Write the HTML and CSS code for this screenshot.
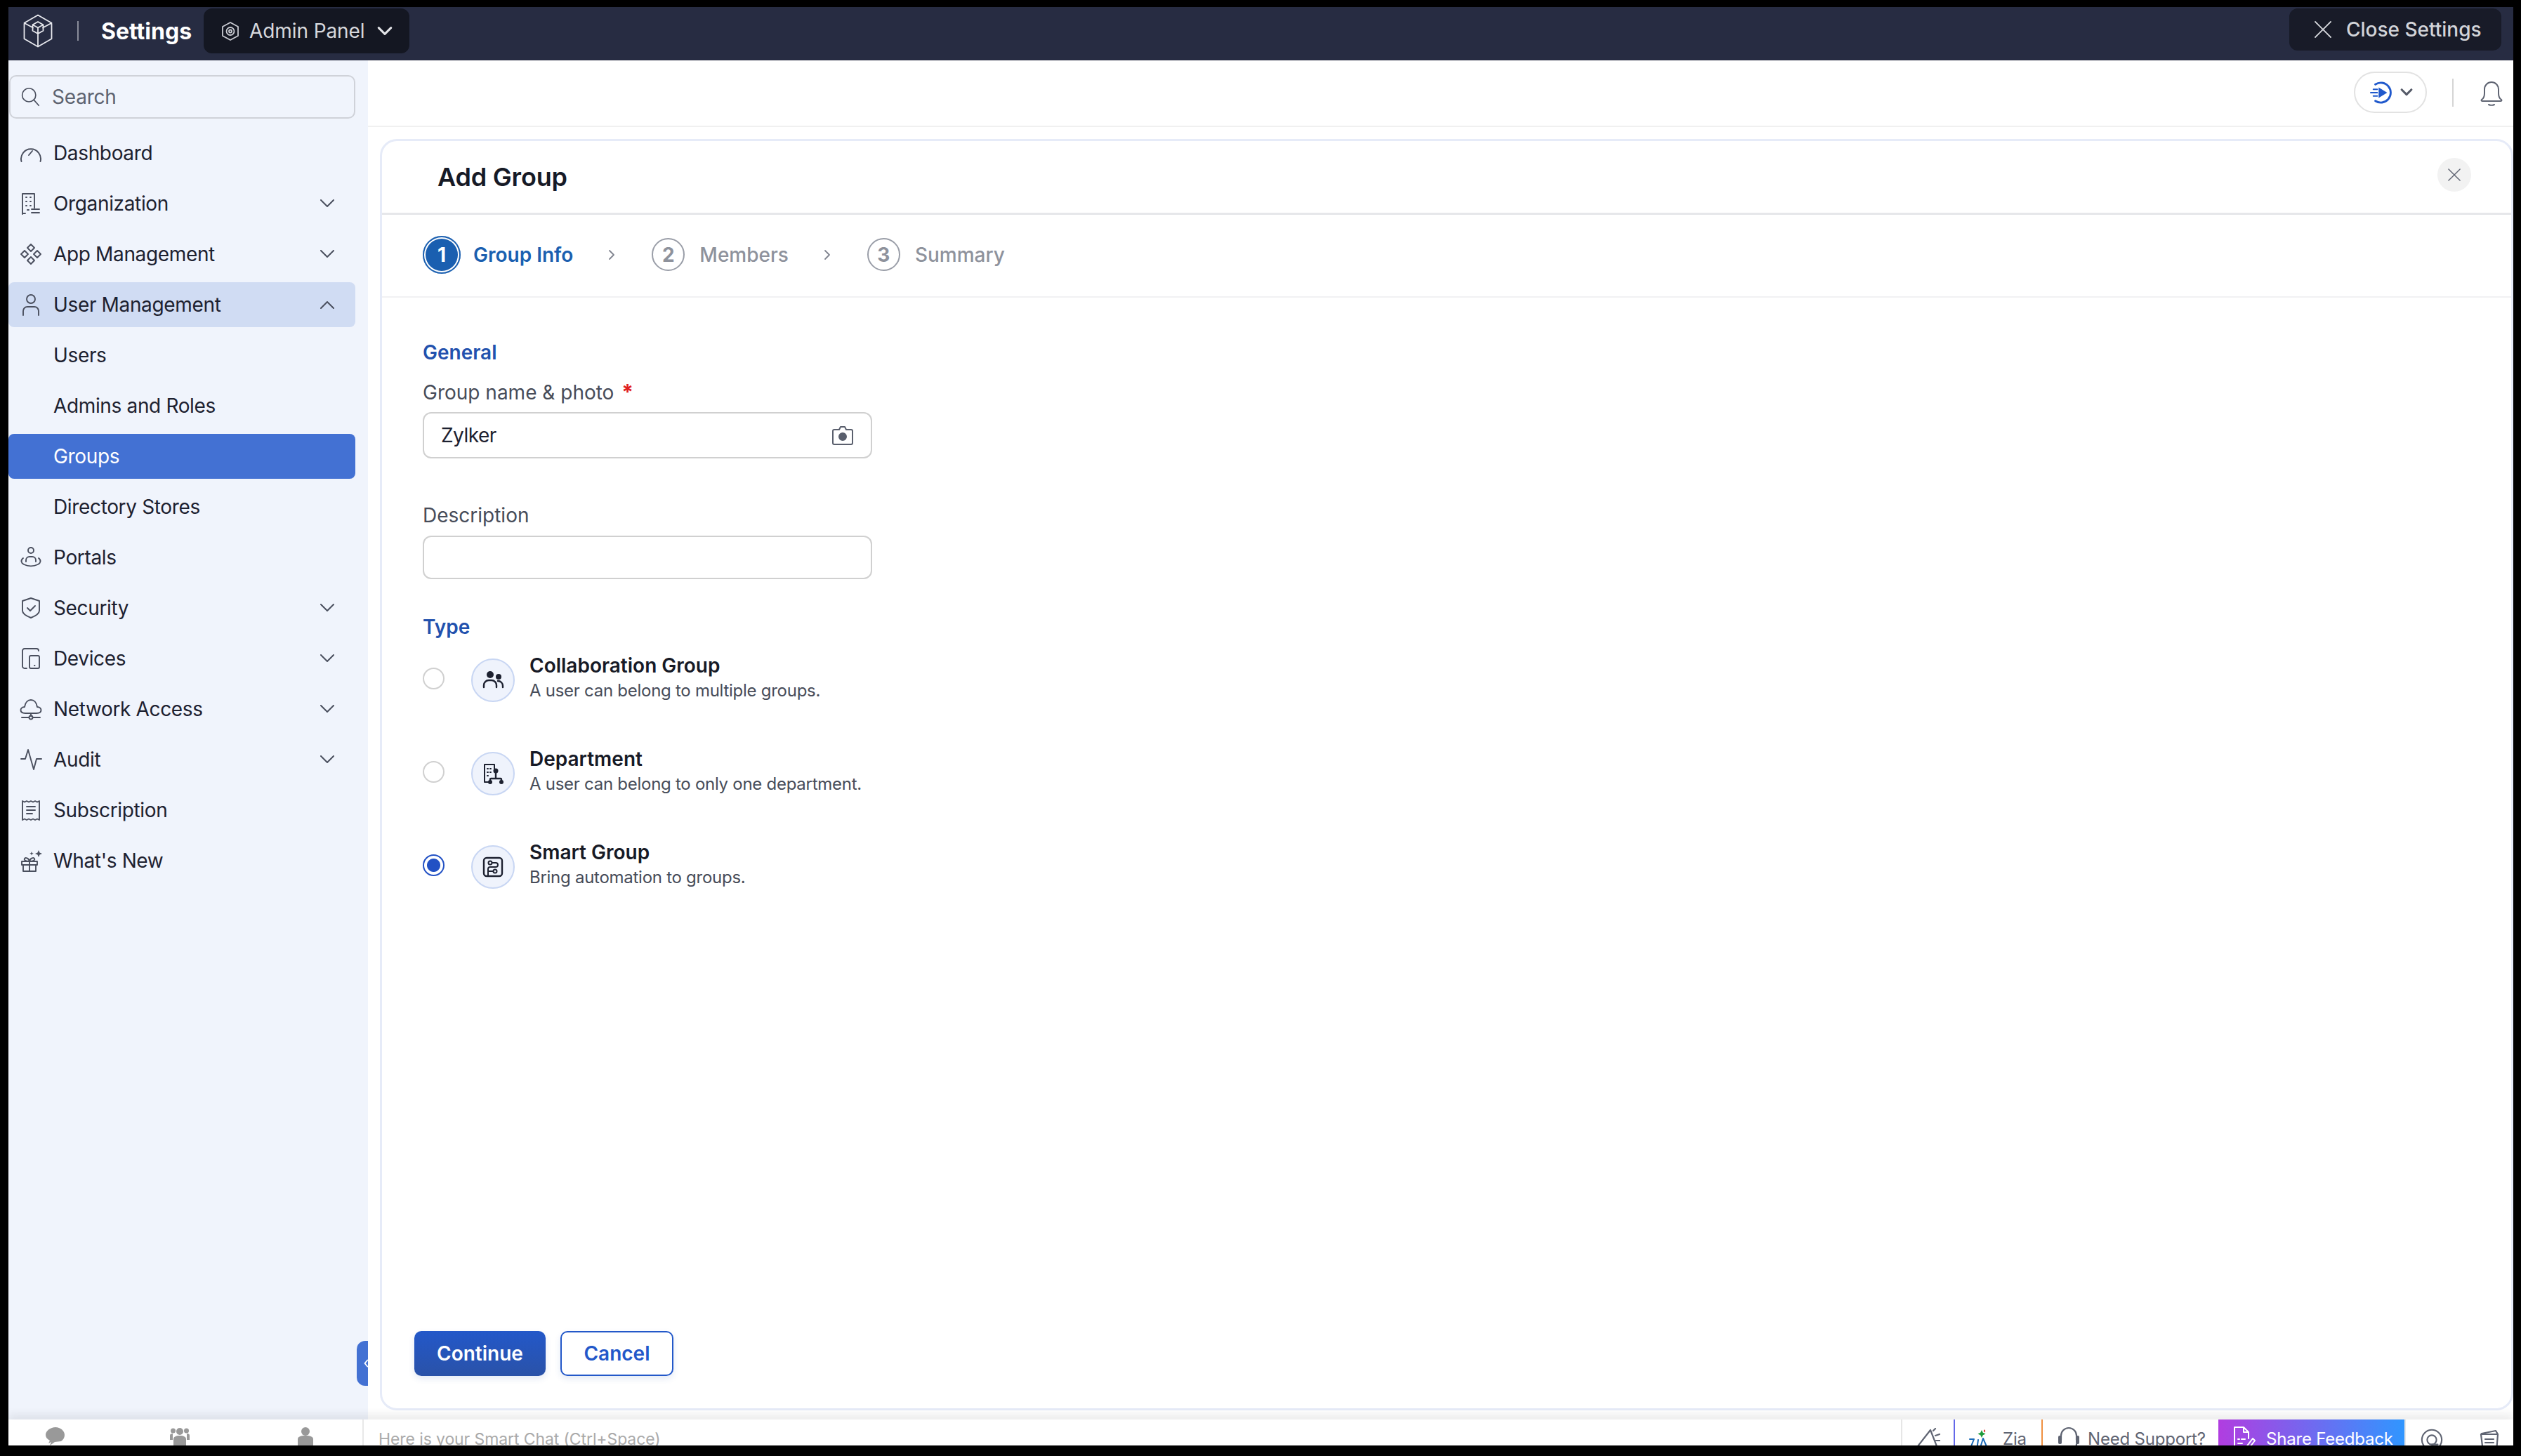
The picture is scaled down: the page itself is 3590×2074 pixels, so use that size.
FILE: index.html
```html
<!DOCTYPE html>
<html lang="en">
<head>
    <meta charset="UTF-8">
    <title>Settings - Add Group</title>
    <link rel="stylesheet" href="styles.css">
</head>
<body>
<div class="frame">
    <!-- Top bar -->
    <header class="topbar">
        <svg class="logo" viewBox="0 0 42 48"><path d="M21 1.500 40.500 12.700v22.600L21 46.500 1.500 35.300V12.700zM1.500 12.700 14 19.500M40.500 12.700 28 19.500M21 46.500V29M21 11l7.500 4.300v8.500L21 28l-7.500-4.200v-8.500zM13.500 15.300 21 19.500l7.500-4.200M21 19.500V28"/></svg>
        <span class="topbar-sep"></span>
        <span class="topbar-title">Settings</span>
        <div class="panel-switch">
            <svg class="panel-icon" viewBox="0 0 24 27"><path d="M12 1 23 7v13l-11 6-11-6V7z"/><circle cx="12" cy="13.500" r="5.500"/><circle cx="12" cy="13.500" r="2"/></svg>
            <span>Admin Panel</span>
            <svg class="panel-chev" viewBox="0 0 24 16"><path d="M2 3l10 10L22 3"/></svg>
        </div>
        <div class="close-settings">
            <svg class="x-icon" viewBox="0 0 24 24"><path d="M1 1l22 22M23 1 1 23"/></svg>
            <span>Close Settings</span>
        </div>
    </header>

    <div class="middle">
        <!-- Sidebar -->
        <aside class="sidebar">
            <div class="search">
                <svg class="ic" viewBox="0 0 32 32"><circle cx="14" cy="13" r="11"/><path d="M22 21l8 9"/></svg>
                <span>Search</span>
            </div>
            <nav class="nav">
                <div class="nav-item">
                    <svg class="ic" viewBox="0 0 32 32"><path d="M2.500 28a14 14 0 1 1 27 0M13 19l5-6"/></svg>
                    <span>Dashboard</span>
                </div>
                <div class="nav-item">
                    <svg class="ic" viewBox="0 0 32 32"><path d="M4 31V2h17v20M4 30h4M11 25h2M17 24h11M17 29h11M9 7h1M15 7h1M9 13h1M15 13h1M9 19h1M15 19h1"/></svg>
                    <span>Organization</span>
                    <svg class="chev" viewBox="0 0 20 12"><path d="M1 1l9 9 9-9"/></svg>
                </div>
                <div class="nav-item">
                    <svg class="ic" viewBox="0 0 32 32"><path d="M16 2l5 5-5 5-5-5zM7 11l5 5-5 5-5-5zM25 11l5 5-5 5-5-5zM16 20l5 5-5 5-5-5z"/></svg>
                    <span>App Management</span>
                    <svg class="chev" viewBox="0 0 20 12"><path d="M1 1l9 9 9-9"/></svg>
                </div>
                <div class="nav-item is-open">
                    <svg class="ic" viewBox="0 0 32 32"><circle cx="16" cy="8" r="6"/><path d="M5 31v-6a6 6 0 0 1 6-6h10a6 6 0 0 1 6 6v6"/></svg>
                    <span>User Management</span>
                    <svg class="chev" viewBox="0 0 20 12"><path d="M1 11l9-9 9 9"/></svg>
                </div>
                <div class="nav-item sub">Users</div>
                <div class="nav-item sub">Admins and Roles</div>
                <div class="nav-item sub is-active">Groups</div>
                <div class="nav-item sub">Directory Stores</div>
                <div class="nav-item">
                    <svg class="ic" viewBox="0 0 32 32"><circle cx="16" cy="6" r="4"/><path d="M9 22v-2a5 5 0 0 1 5-5h4a5 5 0 0 1 5 5v2M5 17c-4 3-3 7 1 9 6 3 14 3 20 0 4-2 5-6 1-9"/></svg>
                    <span>Portals</span>
                </div>
                <div class="nav-item">
                    <svg class="ic" viewBox="0 0 32 32"><path d="M16 2l12 4v14c0 5-7 8-12 10C11 28 4 25 4 20V6zM11 16l4 4 7-7"/></svg>
                    <span>Security</span>
                    <svg class="chev" viewBox="0 0 20 12"><path d="M1 1l9 9 9-9"/></svg>
                </div>
                <div class="nav-item">
                    <svg class="ic" viewBox="0 0 32 32"><path d="M10 30H7a3 3 0 0 1-3-3V5a3 3 0 0 1 3-3h17a3 3 0 0 1 3 3M16 12h10a2 2 0 0 1 2 2v14a2 2 0 0 1-2 2H16a2 2 0 0 1-2-2V14a2 2 0 0 1 2-2zM21 26h.5"/></svg>
                    <span>Devices</span>
                    <svg class="chev" viewBox="0 0 20 12"><path d="M1 1l9 9 9-9"/></svg>
                </div>
                <div class="nav-item">
                    <svg class="ic" viewBox="0 0 32 32"><path d="M8 22c-9 0-8-9-1-9C8 6 12 3 16 3s8 3 9 10c7 0 8 9-1 9zM16 22v4M3 28h10M19 28h10"/><circle cx="16" cy="28" r="2.500"/></svg>
                    <span>Network Access</span>
                    <svg class="chev" viewBox="0 0 20 12"><path d="M1 1l9 9 9-9"/></svg>
                </div>
                <div class="nav-item">
                    <svg class="ic" viewBox="0 0 32 32"><path d="M2 15h6l4-13 8 28 4-15h7"/></svg>
                    <span>Audit</span>
                    <svg class="chev" viewBox="0 0 20 12"><path d="M1 1l9 9 9-9"/></svg>
                </div>
                <div class="nav-item">
                    <svg class="ic" viewBox="0 0 32 32"><path d="M4 3l3 1.500L10 3l3 1.500L16 3l3 1.500L22 3l3 1.500L28 3v27l-3-1.500-3 1.500-3-1.500-3 1.500-3-1.500-3 1.500-3-1.500L4 30zM10 11h12M10 16h12M10 21h8"/></svg>
                    <span>Subscription</span>
                </div>
                <div class="nav-item">
                    <svg class="ic" viewBox="0 0 32 32"><path d="M3 17h22v5H3zM5 22v9h18v-9M14 17v14M14 17c-6 0-8-2-7-4s6-1 7 4c1-5 6-6 7-4s-1 4-7 4z"/><path class="ic-fill" d="M27 1l1.500 3.500L32 6l-3.500 1.500L27 11l-1.500-3.500L22 6l3.500-1.500zM17 3l.8 2 2 .8-2 .8-.8 2-.8-2-2-.8 2-.8z"/></svg>
                    <span>What's New</span>
                </div>
            </nav>
            <div class="side-toggle"><svg viewBox="0 0 8 16"><path d="M7 2 2 8l5 6"/></svg></div>
        </aside>

        <main class="main">
            <div class="util-bar">
                <div class="play-pill">
                    <svg class="play-icon" viewBox="0 0 34 32"><path d="M8 3.500A15 15 0 1 1 8 28.500"/><path class="play-tri" d="M13 8l13 8-13 8z"/><path d="M5 11h6M1 16h10M5 21h6" stroke-width="2"/></svg>
                    <svg class="play-chev" viewBox="0 0 20 14"><path d="M2 2l8 8 8-8"/></svg>
                </div>
                <span class="util-sep"></span>
                <svg class="bell" viewBox="0 0 34 38"><path d="M3 29c3-2 4-5 4-9v-6a10 10 0 0 1 20 0v6c0 4 1 7 4 9 1 1 0 2-1 2H4c-1 0-2-1-1-2zM13 36c2 1 6 1 8 0"/></svg>
            </div>

            <section class="card">
                <div class="card-head">
                    <h1>Add Group</h1>
                    <button class="card-close"><svg viewBox="0 0 20 20"><path d="M1 1l18 18M19 1 1 19"/></svg></button>
                </div>

                <div class="stepper">
                    <div class="step is-current"><span class="step-num">1</span><span class="step-label">Group Info</span></div>
                    <svg class="step-arrow" viewBox="0 0 10 16"><path d="M2 2l6 6-6 6"/></svg>
                    <div class="step"><span class="step-num">2</span><span class="step-label">Members</span></div>
                    <svg class="step-arrow" viewBox="0 0 10 16"><path d="M2 2l6 6-6 6"/></svg>
                    <div class="step"><span class="step-num">3</span><span class="step-label">Summary</span></div>
                </div>

                <form class="form">
                    <h2 class="section-title">General</h2>
                    <label class="field-label">Group name &amp; photo <span class="req">*</span></label>
                    <div class="field field-name">
                        <span>Zylker</span>
                        <svg class="camera" viewBox="0 0 32 32"><path d="M4 8h7l2-4h6l2 4h7a2 2 0 0 1 2 2v0V27a2 2 0 0 1-2 2H4a2 2 0 0 1-2-2V10a2 2 0 0 1 2-2z"/><circle cx="16" cy="18" r="5"/></svg>
                    </div>
                    <label class="field-label label-desc">Description</label>
                    <div class="field field-desc"></div>
                    <h2 class="section-title title-type">Type</h2>

                    <div class="type-list">
                        <div class="type-row">
                            <span class="radio"></span>
                            <span class="type-icon">
                                <svg viewBox="0 0 32 32"><circle cx="12" cy="8" r="5" class="solid"/><circle cx="24" cy="11" r="4" class="solid"/><path d="M3 26v-3a7 7 0 0 1 7-7h4a7 7 0 0 1 7 7v3M23 17c4 0 7 3 7 7v2"/></svg>
                            </span>
                            <div class="type-text"><strong>Collaboration Group</strong><p>A user can belong to multiple groups.</p></div>
                        </div>
                        <div class="type-row">
                            <span class="radio"></span>
                            <span class="type-icon">
                                <svg viewBox="0 0 32 32"><path d="M10 28H4V3h14v6" stroke-width="2"/><path d="M8 9h1M12 9h1M8 14h1M12 14h1M8 19h1" stroke-width="2"/><circle cx="20" cy="12" r="3.500" class="solid"/><path d="M20 14v9M12 28v-4a1 1 0 0 1 1-1h14a1 1 0 0 1 1 1v4"/><circle cx="12" cy="28" r="3" class="solid"/><circle cx="28" cy="28" r="3" class="solid"/></svg>
                            </span>
                            <div class="type-text"><strong>Department</strong><p>A user can belong to only one department.</p></div>
                        </div>
                        <div class="type-row">
                            <span class="radio is-on"></span>
                            <span class="type-icon">
                                <svg viewBox="0 0 32 32"><rect x="3" y="3" width="26" height="26" rx="4"/><circle cx="12" cy="10" r="2.500" stroke-width="2"/><circle cx="19" cy="22" r="2.500" stroke-width="2"/><path d="M15 10h5a3 3 0 0 1 0 6h-8a3 3 0 0 0-3 3v10M16 22H9" stroke-width="2"/></svg>
                            </span>
                            <div class="type-text"><strong>Smart Group</strong><p>Bring automation to groups.</p></div>
                        </div>
                    </div>
                </form>

                <div class="actions">
                    <button class="btn btn-primary">Continue</button>
                    <button class="btn btn-outline">Cancel</button>
                </div>
            </section>
        </main>
    </div>

    <!-- Bottom bar, cut off by the edge of the window -->
    <footer class="footbar">
        <div class="foot-left">
            <svg class="foot-ic ic-chat" viewBox="0 0 28 26"><path d="M15 0c7 0 13 5 13 11 0 4-2 7-5 9l-9 1-7 5 2-5-4 2 2-4C3 17 1 14 1 11 1 5 8 0 15 0z"/></svg>
            <svg class="foot-ic ic-people" viewBox="0 0 28 26"><circle cx="14" cy="6" r="5"/><circle cx="4.500" cy="5" r="3.500"/><circle cx="23.500" cy="5" r="3.500"/><path d="M5 26V17c0-3 3-5 9-5s9 2 9 5v9zM0 18v-6c0-2 1-3 4-3v9zM28 18v-6c0-2-1-3-4-3v9z"/></svg>
            <svg class="foot-ic ic-person" viewBox="0 0 22 26"><circle cx="11" cy="6" r="6"/><path d="M0 26V17c0-3 3-5 11-5s11 2 11 5v9z"/></svg>
        </div>
        <div class="foot-chat">Here is your Smart Chat (Ctrl+Space)</div>
        <div class="foot-seg seg-announce">
            <svg class="foot-line" viewBox="0 0 34 34"><path d="M20 3 2 26l5 6 22-6zM24 4l3-3M27 11l6-2M28 18h6"/></svg>
        </div>
        <div class="foot-seg seg-zia">
            <svg class="zia-logo" viewBox="0 0 30 30"><path class="zia-star" d="M18 1l1.800 3.700L23.500 6.500 19.800 8.300 18 12l-1.800-3.700L12.500 6.500l3.700-1.800z"/><path class="zia-dot" d="M22 0l1.300 2.200L22 4.400l-1.300-2.200z"/><path class="zia-text" d="M1 14h6L1 29M13 15l-2 14M20 13l-5 16M20 13l7 16"/></svg>
            <span>Zia</span>
        </div>
        <div class="foot-seg seg-support">
            <svg class="foot-line head" viewBox="0 0 32 36"><path d="M5 20v-6a11 11 0 0 1 22 0v6"/><rect class="solid-grey" x="1" y="14" width="5" height="12" rx="2"/><rect class="solid-grey" x="26" y="14" width="5" height="12" rx="2"/><path d="M27 26c0 5-4 7-8 7"/></svg>
            <span>Need Support?</span>
        </div>
        <div class="foot-seg seg-feedback">
            <svg class="feedback-ic" viewBox="0 0 32 38"><path d="M12 30H2V2h13l7 7v9M15 2v7h7M7 19h2M7 25h6M12 19h5M28 18l3 3-10 13-4 2 1-5z"/></svg>
            <span>Share Feedback</span>
        </div>
        <div class="foot-seg seg-tools">
            <svg class="foot-line tool-q" viewBox="0 0 34 36"><circle cx="17" cy="18" r="15"/><circle cx="17" cy="18" r="7"/><path d="M17 25h9"/></svg>
            <svg class="foot-line tool-notes" viewBox="0 0 30 36"><path d="M4 8l20-4 3 5M3 9h24l-2 25H6zM9 16h12M9 21h12M9 26h7"/></svg>
        </div>
    </footer>
</div>
</body>
</html>
```

FILE: styles.css
```css
* {
    box-sizing: border-box;
}
html, body {
    margin: 0;
    height: 100%;
    background-color: #000;
}
body {
    font-family: Inter, "Open Sans", sans-serif;
    font-size: 28px;
    color: #1d2130;
}
.frame {
    height: 2074px;
    padding: 10px 11px 15px 12px;
    display: flex;
    flex-direction: column;
    overflow: hidden;
}
svg {
    display: block;
    flex: none;
    fill: none;
    stroke-linecap: round;
    stroke-linejoin: round;
}

/* top bar */
.topbar {
    height: 76px;
    flex: none;
    padding-bottom: 8px;
    background-color: #272c42;
    display: flex;
    align-items: center;
    color: #fff;
}
.logo {
    width: 42px;
    height: 48px;
    margin-left: 21px;
    stroke: #e8e9ee;
    stroke-width: 1.8;
}
.topbar-sep {
    width: 2px;
    height: 28px;
    background-color: #8a8d9a;
    margin-left: 35px;
}
.topbar-title {
    font-size: 32px;
    font-weight: 700;
    margin-left: 32px;
}
.panel-switch {
    height: 64px;
    width: 293px;
    margin-left: 17px;
    background-color: #141722;
    border-radius: 12px;
    display: flex;
    align-items: center;
    padding-left: 26px;
    color: #d6d8dd;
    letter-spacing: -0.1px;
}
.panel-icon {
    width: 24px;
    height: 27px;
    stroke: #c9cbd2;
    stroke-width: 1.8;
    margin-right: 15px;
}
.panel-chev {
    width: 22px;
    height: 14px;
    stroke: #e3e4e8;
    stroke-width: 3.5;
    margin-left: 18px;
}
.close-settings {
    margin-left: auto;
    margin-right: 17px;
    margin-top: -4px;
    width: 302px;
    height: 60px;
    background-color: #181b28;
    border-radius: 12px;
    display: flex;
    align-items: center;
    padding-left: 36px;
    gap: 21px;
    color: #d2d4d9;
    font-weight: 500;
    font-size: 28px;
}
.x-icon {
    width: 24px;
    height: 24px;
    stroke: #d2d4d9;
    stroke-width: 1.8;
}

.middle {
    flex: 1;
    display: flex;
    min-height: 0;
}

/* sidebar */
.sidebar {
    position: relative;
    width: 512px;
    flex: none;
    background-color: #f0f4fc;
    padding: 21px 18px 0 0;
}
.search {
    height: 62px;
    margin-left: 1px;
    border: 2px solid #cfd2d9;
    border-radius: 10px;
    display: flex;
    align-items: center;
    padding-left: 14px;
    gap: 17px;
    color: #5d6370;
    letter-spacing: -0.2px;
}
.search .ic {
    width: 28px;
    height: 28px;
}
.ic {
    width: 32px;
    height: 32px;
    stroke: #4a4f5e;
    stroke-width: 1.9;
}
.ic-fill {
    fill: #4a4f5e;
    stroke: none;
}
.nav {
    margin-top: 17px;
    display: flex;
    flex-direction: column;
    gap: 8px;
}
.nav-item {
    height: 64px;
    display: flex;
    align-items: center;
    padding-left: 16px;
    gap: 16px;
    border-radius: 8px;
    letter-spacing: -0.35px;
}
.nav-item.sub {
    padding-left: 64px;
}
.is-open {
    background-color: #d0dcf3;
}
.is-active {
    background-color: #4371d3;
    color: #fff;
}
.chev {
    width: 20px;
    height: 12px;
    stroke: #4a4f5e;
    stroke-width: 2;
    margin-left: auto;
    margin-right: 30px;
}
.side-toggle {
    position: absolute;
    right: 0;
    bottom: 48px;
    width: 16px;
    height: 64px;
    background-color: #4371d3;
    border-radius: 12px 0 0 12px;
    display: flex;
    align-items: center;
    justify-content: flex-end;
}
.side-toggle svg {
    width: 6px;
    height: 14px;
    stroke: #fff;
    stroke-width: 2.5;
}

/* main */
.main {
    flex: 1;
    min-width: 0;
    background-color: #fff;
    display: flex;
    flex-direction: column;
}
.util-bar {
    height: 95px;
    flex: none;
    border-bottom: 2px solid #f0f0f0;
    display: flex;
    align-items: center;
    padding-left: 2828px;
    padding-bottom: 2px;
}
.play-pill {
    width: 104px;
    height: 59px;
    border: 2px solid #e2e2e2;
    border-radius: 30px;
    display: flex;
    align-items: center;
    padding-left: 21px;
    gap: 11px;
}
.play-icon {
    width: 32px;
    height: 32px;
    stroke: #2059cc;
    stroke-width: 3;
}
.play-tri {
    fill: #2059cc;
    stroke: none;
}
.play-chev {
    width: 18px;
    height: 12px;
    stroke: #555a68;
    stroke-width: 3.5;
}
.util-sep {
    width: 2px;
    height: 40px;
    background-color: #d5d5d5;
    margin-left: 36px;
}
.bell {
    width: 34px;
    height: 38px;
    stroke: #5f6472;
    stroke-width: 2;
    margin-left: 37px;
}
.card {
    flex: 1;
    min-height: 0;
    margin: 17px 0 13px 17px;
    border: 3px solid #e6ebf8;
    border-radius: 24px;
    display: flex;
    flex-direction: column;
}
.card-head {
    height: 105px;
    flex: none;
    border-bottom: 3px solid #e6e7ea;
    display: flex;
    align-items: center;
    justify-content: space-between;
    padding: 0 57px 0 79px;
}
.card-head h1 {
    margin: 0;
    font-size: 36px;
    font-weight: 600;
    letter-spacing: -0.2px;
    color: #171a26;
}
.card-close {
    width: 48px;
    height: 48px;
    margin-top: -6px;
    border: none;
    border-radius: 50%;
    background-color: #f2f2f2;
    display: flex;
    align-items: center;
    justify-content: center;
    padding: 0;
}
.card-close svg {
    width: 18px;
    height: 18px;
    stroke: #5f6472;
    stroke-width: 1.6;
}

/* stepper */
.stepper {
    height: 118px;
    flex: none;
    padding-bottom: 3px;
    border-bottom: 2px solid #f1f1f3;
    display: flex;
    align-items: center;
    padding-left: 58px;
    color: #8e929c;
    font-weight: 500;
}
.step {
    display: flex;
    align-items: center;
    gap: 21px;
}
.step-num {
    width: 47px;
    height: 47px;
    border: 2px solid #9a9ea8;
    border-radius: 50%;
    display: flex;
    align-items: center;
    justify-content: center;
    font-weight: 700;
    font-size: 28px;
}
.step-arrow {
    width: 10px;
    height: 16px;
    stroke: #80848f;
    stroke-width: 1.8;
    margin: 0 52px 0 50px;
}
.is-current {
    color: #1a5fb0;
    font-weight: 600;
    gap: 18px;
}
.is-current .step-num {
    width: 54px;
    height: 54px;
    border: none;
    background-color: #1a5fb0;
    box-shadow: inset 0 0 0 2px #1a5fb0, inset 0 0 0 4px #fff;
    color: #fff;
}

/* form */
.form {
    padding: 61px 0 0 58px;
}
.section-title {
    margin: 0;
    font-size: 28px;
    line-height: 34px;
    font-weight: 600;
    color: #2251ad;
}
.field-label {
    display: block;
    margin-top: 23px;
    line-height: 34px;
    color: #474c59;
}
.label-desc {
    margin-top: 64px;
}
.req {
    color: #e02020;
    font-size: 30px;
    line-height: 0;
    font-weight: 700;
    margin-left: 3px;
}
.field {
    width: 640px;
    border: 2px solid #d0d0d0;
    border-radius: 12px;
    display: flex;
    align-items: center;
    justify-content: space-between;
    padding: 0 24px;
    letter-spacing: -0.5px;
}
.field-name {
    height: 66px;
    margin-top: 11px;
}
.field-desc {
    height: 62px;
    margin-top: 12px;
}
.camera {
    width: 32px;
    height: 32px;
    stroke: #5a5f6d;
    stroke-width: 2;
}
.camera circle {
    fill: #5a5f6d;
}
.title-type {
    margin-top: 51px;
}
.type-list {
    margin-top: 20px;
    display: flex;
    flex-direction: column;
    gap: 62px;
}
.type-row {
    display: flex;
    align-items: flex-start;
}
.radio {
    width: 31px;
    height: 31px;
    margin-top: 21px;
    border: 2px solid #d0d0d0;
    border-radius: 50%;
    flex: none;
}
.radio.is-on {
    border-color: #2251c4;
    background: radial-gradient(circle, #2251c4 0 9px, #fff 10px);
}
.type-icon {
    width: 62px;
    height: 62px;
    margin: 8px 21px 0 38px;
    border: 2px solid #c8d6f3;
    border-radius: 50%;
    background-color: #eff3fc;
    display: flex;
    align-items: center;
    justify-content: center;
    flex: none;
}
.type-icon svg {
    width: 32px;
    height: 32px;
    stroke: #1d2130;
    stroke-width: 2.4;
}
.type-icon .solid {
    fill: #1d2130;
    stroke: none;
}
.type-text strong {
    display: block;
    font-size: 28px;
    line-height: 36px;
    font-weight: 600;
    color: #171a26;
}
.type-text p {
    margin: 0;
    font-size: 24px;
    line-height: 35px;
    letter-spacing: -0.27px;
    color: #474c59;
}

/* buttons */
.actions {
    margin-top: auto;
    padding: 0 0 46px 46px;
    display: flex;
    gap: 21px;
}
.btn {
    height: 64px;
    border-radius: 10px;
    font-family: inherit;
    font-size: 28px;
    font-weight: 600;
    box-shadow: 0 4px 10px rgba(32, 80, 170, 0.12);
}
.btn-primary {
    width: 187px;
    border: none;
    background: linear-gradient(#2358c9, #2a52a8);
    color: #fff;
}
.btn-outline {
    width: 161px;
    border: 2px solid #2358c9;
    background-color: #fff;
    color: #2358c9;
}

/* bottom bar */
.footbar {
    position: relative;
    height: 37px;
    flex: none;
    background-color: #fff;
    display: flex;
    overflow: hidden;
    box-shadow: 0 -8px 12px rgba(0, 0, 0, 0.07);
    font-size: 24px;
    line-height: 28px;
    letter-spacing: -0.2px;
    color: #5f6472;
}
.foot-left {
    width: 506px;
    flex: none;
    border-right: 2px solid #e8e8e8;
    display: flex;
    padding-left: 52px;
    padding-top: 11px;
}
.foot-ic {
    fill: #999;
    stroke: none;
    height: 26px;
}
.ic-chat {
    width: 28px;
}
.ic-people {
    width: 28px;
    margin-left: 150px;
}
.ic-person {
    width: 22px;
    margin-left: 154px;
}
.foot-chat {
    flex: 1;
    padding: 14px 0 0 21px;
    font-size: 23px;
    letter-spacing: -0.1px;
    color: #aaa;
}
.foot-seg {
    flex: none;
    display: flex;
    align-items: flex-start;
    padding-top: 14px;
    border-left: 2px solid #e6e6e6;
}
.foot-line {
    width: 34px;
    height: 34px;
    stroke: #5f6472;
    stroke-width: 2.2;
}
.seg-announce {
    width: 75px;
    padding-left: 20px;
    padding-top: 12px;
}
.seg-zia {
    width: 125px;
    border-left-color: #6468e8;
    padding-left: 20px;
    gap: 18px;
}
.zia-logo {
    width: 30px;
    height: 30px;
    stroke-width: 2;
}
.zia-star {
    fill: #1f9a3c;
}
.zia-dot {
    fill: #e02020;
}
.zia-text {
    stroke: #1a6ab8;
}
.seg-support {
    width: 252px;
    border-left-color: #f09040;
    padding-left: 21px;
    gap: 11px;
}
.head {
    width: 32px;
    height: 36px;
    margin-top: -5px;
}
.solid-grey {
    fill: #5f6472;
    stroke: none;
}
.seg-feedback {
    width: 265px;
    border-left: none;
    background: linear-gradient(90deg, #b13de0, #3096ff);
    color: #fff;
    padding-left: 21px;
    gap: 15px;
}
.feedback-ic {
    width: 32px;
    height: 38px;
    margin-top: -5px;
    stroke: #fff;
    stroke-width: 2;
}
.seg-tools {
    width: 155px;
    padding-left: 20px;
    gap: 50px;
    padding-top: 12px;
}
.tool-notes {
    width: 30px;
    height: 36px;
}
```
